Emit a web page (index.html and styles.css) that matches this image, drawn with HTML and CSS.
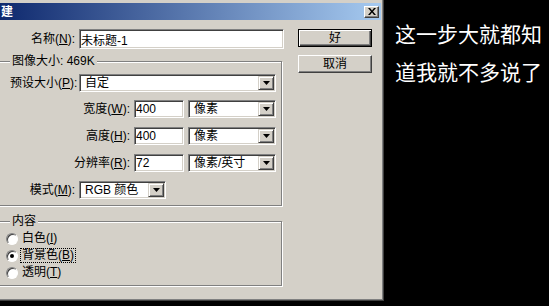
FILE: index.html
```html
<!DOCTYPE html>
<html lang="zh-CN">
<head>
  <meta charset="UTF-8" />
  <meta name="viewport" content="width=device-width, initial-scale=1.0"/>
  <title>新建</title>
  <link rel="stylesheet" href="styles.css">
</head>
<body>
  <div class="desk">
    <div class="window" role="dialog" aria-labelledby="dlgTitle">
      <div class="titlebar">
        <span id="dlgTitle" class="title">建</span>
        <button class="close-btn" aria-label="关闭">
          <svg width="8" height="7" viewBox="0 0 8 7" aria-hidden="true">
            <path d="M0 0h2l2 2.5L6 0h2L5 3.5 8 7H6L4 4.5 2 7H0l3-3.5z" fill="#000"/>
          </svg>
        </button>
      </div>

      <div class="dialog-body">
        <div class="main-col">
          <div class="field-row name-row">
            <label class="lbl" for="docName">名称(<u>N</u>):</label>
            <input id="docName" class="text-input name-input" type="text" value="未标题-1">
          </div>

          <fieldset class="group size-group">
            <legend>图像大小: 469K</legend>
            <div class="field-row first-row">
              <span class="lbl">预设大小(<u>P</u>):</span>
              <div class="combo combo-wide"><span class="combo-value">自定</span><span class="combo-btn"><svg width="7" height="4" viewBox="0 0 7 4"><path d="M0 0h7L3.5 4z" fill="#000"/></svg></span></div>
            </div>
            <div class="field-row size-row">
              <label class="lbl lbl-wide" for="width">宽度(<u>W</u>):</label>
              <input id="width" class="text-input num-input" type="text" value="400">
              <div class="combo combo-unit"><span class="combo-value">像素</span><span class="combo-btn"><svg width="7" height="4" viewBox="0 0 7 4"><path d="M0 0h7L3.5 4z" fill="#000"/></svg></span></div>
            </div>
            <div class="field-row">
              <label class="lbl lbl-wide" for="height">高度(<u>H</u>):</label>
              <input id="height" class="text-input num-input" type="text" value="400">
              <div class="combo combo-unit"><span class="combo-value">像素</span><span class="combo-btn"><svg width="7" height="4" viewBox="0 0 7 4"><path d="M0 0h7L3.5 4z" fill="#000"/></svg></span></div>
            </div>
            <div class="field-row">
              <label class="lbl lbl-wide" for="res">分辨率(<u>R</u>):</label>
              <input id="res" class="text-input num-input" type="text" value="72">
              <div class="combo combo-unit"><span class="combo-value">像素/英寸</span><span class="combo-btn"><svg width="7" height="4" viewBox="0 0 7 4"><path d="M0 0h7L3.5 4z" fill="#000"/></svg></span></div>
            </div>
            <div class="field-row">
              <span class="lbl">模式(<u>M</u>):</span>
              <div class="combo combo-mode"><span class="combo-value">RGB 颜色</span><span class="combo-btn"><svg width="7" height="4" viewBox="0 0 7 4"><path d="M0 0h7L3.5 4z" fill="#000"/></svg></span></div>
            </div>
          </fieldset>

          <fieldset class="group content-group">
            <legend>内容</legend>
            <div class="radio-row first-radio">
              <span class="radio"></span>
              <span class="radio-text">白色(<u>I</u>)</span>
            </div>
            <div class="radio-row">
              <span class="radio is-checked"></span>
              <span class="radio-text has-focus">背景色(<u>B</u>)</span>
            </div>
            <div class="radio-row">
              <span class="radio"></span>
              <span class="radio-text">透明(<u>T</u>)</span>
            </div>
          </fieldset>
        </div>

        <div class="btn-col">
          <button class="btn btn-default">好</button>
          <button class="btn">取消</button>
        </div>
      </div>
    </div>

    <div class="note">
      <p>这一步大就都知</p>
      <p>道我就不多说了</p>
    </div>
  </div>
</body>
</html>
```

FILE: styles.css
```css
:root {
  --face: #d4d0c8;
  --shadow: #808080;
  --dark: #404040;
  --light: #fff;
}

body {
  margin: 0;
  background: #000;
  color: #000;
  font: 12px/14px "Liberation Sans", "Noto Sans CJK SC", sans-serif;
  overflow: hidden;
}

.desk {
  display: flex;
  align-items: flex-start;
}

/* window frame */
.window {
  flex: none;
  width: 396px;
  height: 301px;
  margin-left: -12px;
  box-sizing: border-box;
  padding: 3px 2px 0 0;
  background: var(--face);
  border-right: 1px solid var(--dark);
  border-bottom: 1px solid var(--dark);
  box-shadow: inset -1px -1px 0 var(--shadow);
}

.titlebar {
  height: 17px;
  display: flex;
  align-items: center;
  justify-content: space-between;
  background: linear-gradient(to right, #0a246a, #a6caf0);
}

.title {
  padding-left: 13px;
  color: #fff;
  font-weight: bold;
  font-size: 12px;
}

.close-btn {
  width: 15px;
  height: 12px;
  margin-right: 2px;
  padding: 0;
  display: flex;
  align-items: center;
  justify-content: center;
  box-sizing: border-box;
  background: var(--face);
  border: 1px solid;
  border-color: var(--light) var(--dark) var(--dark) var(--light);
  box-shadow: inset -1px -1px 0 var(--shadow);
}

.dialog-body {
  display: flex;
  padding-left: 8px;
}

.main-col {
  flex: none;
  width: 288px;
}

/* rows */
.field-row {
  display: flex;
  align-items: center;
  height: 18px;
  margin-top: 9px;
}

.name-row {
  height: 20px;
}

.lbl {
  flex: none;
  width: 83px;
  padding-right: 4px;
  box-sizing: border-box;
  text-align: right;
  white-space: nowrap;
}

.lbl-wide {
  width: 138px;
}

.group .lbl {
  width: 69px;
}

.group .lbl-wide {
  width: 124px;
}

.text-input {
  box-sizing: border-box;
  margin: 0;
  padding: 0 1px;
  font: inherit;
  background: #fff;
  border: 1px solid;
  border-color: var(--shadow) var(--light) var(--light) var(--shadow);
  box-shadow: inset 1px 1px 0 var(--dark), inset -1px -1px 0 var(--face);
  outline: none;
}

.name-input {
  width: 205px;
  height: 20px;
}

.num-input {
  width: 50px;
  height: 18px;
}

.combo {
  display: flex;
  height: 18px;
  box-sizing: border-box;
  background: #fff;
  border: 1px solid;
  border-color: var(--shadow) var(--light) var(--light) var(--shadow);
  box-shadow: inset 1px 1px 0 var(--dark), inset -1px -1px 0 var(--face);
  padding: 1px;
}

.combo-wide { width: 197px; }
.combo-unit { width: 88px; margin-left: 4px; }
.combo-mode { width: 87px; }

.combo-value {
  flex: 1;
  padding-left: 4px;
  line-height: 14px;
  white-space: nowrap;
}

.combo-btn {
  flex: none;
  width: 16px;
  height: 14px;
  box-sizing: border-box;
  display: flex;
  align-items: center;
  justify-content: center;
  background: var(--face);
  border: 1px solid;
  border-color: var(--face) var(--dark) var(--dark) var(--face);
  box-shadow: inset 1px 1px 0 var(--light), inset -1px -1px 0 var(--shadow);
}

/* group boxes */
.group {
  width: 287px;
  margin: 0 0 0 -1px;
  padding: 0 0 6px 14px;
  min-inline-size: 0;
  box-sizing: border-box;
  border: 1px solid var(--shadow);
  box-shadow: inset 1px 1px 0 var(--light), 1px 1px 0 var(--light);
}

.group legend {
  margin: 0;
  padding: 0 2px;
  line-height: 14px;
  background: var(--face);
}

.size-group {
  margin-top: 5px;
}

.size-group .first-row {
  margin-top: 6px;
}

.size-group .size-row {
  margin-top: 8px;
}

.content-group {
  margin-top: 8px;
  padding-bottom: 4px;
}

.radio-row {
  display: flex;
  align-items: center;
  height: 17px;
  margin-left: -4px;
}

.first-radio {
  margin-top: 2px;
}

.radio {
  flex: none;
  position: relative;
  width: 12px;
  height: 12px;
  box-sizing: border-box;
  border-radius: 50%;
  background: #fff;
  border: 1px solid;
  border-color: var(--shadow) var(--light) var(--light) var(--shadow);
  box-shadow: inset 1px 1px 0 var(--dark);
}

.radio.is-checked::after {
  content: "";
  position: absolute;
  left: 3px;
  top: 3px;
  width: 4px;
  height: 4px;
  border-radius: 50%;
  background: #000;
}

.radio-text {
  margin-left: 3px;
  padding: 0 1px;
  line-height: 13px;
}

.radio-text.has-focus {
  outline: 1px dotted #000;
}

/* buttons */
.btn-col {
  display: flex;
  flex-direction: column;
  gap: 8px;
  margin-left: 14px;
  padding-top: 9px;
}

.btn {
  width: 74px;
  height: 18px;
  padding: 0;
  box-sizing: border-box;
  font: inherit;
  background: var(--face);
  border: 1px solid;
  border-color: var(--light) var(--dark) var(--dark) var(--light);
  box-shadow: inset -1px -1px 0 var(--shadow);
}

.btn-default {
  border-color: #000;
  box-shadow: inset 1px 1px 0 var(--light), inset -1px -1px 0 var(--dark), inset -2px -2px 0 var(--shadow);
}

/* side note */
.note {
  margin-left: 11px;
  padding-top: 14px;
  color: #fff;
  font: 21px/38px "Noto Sans CJK SC", sans-serif;
}

.note p {
  margin: 0;
  white-space: nowrap;
}
```
